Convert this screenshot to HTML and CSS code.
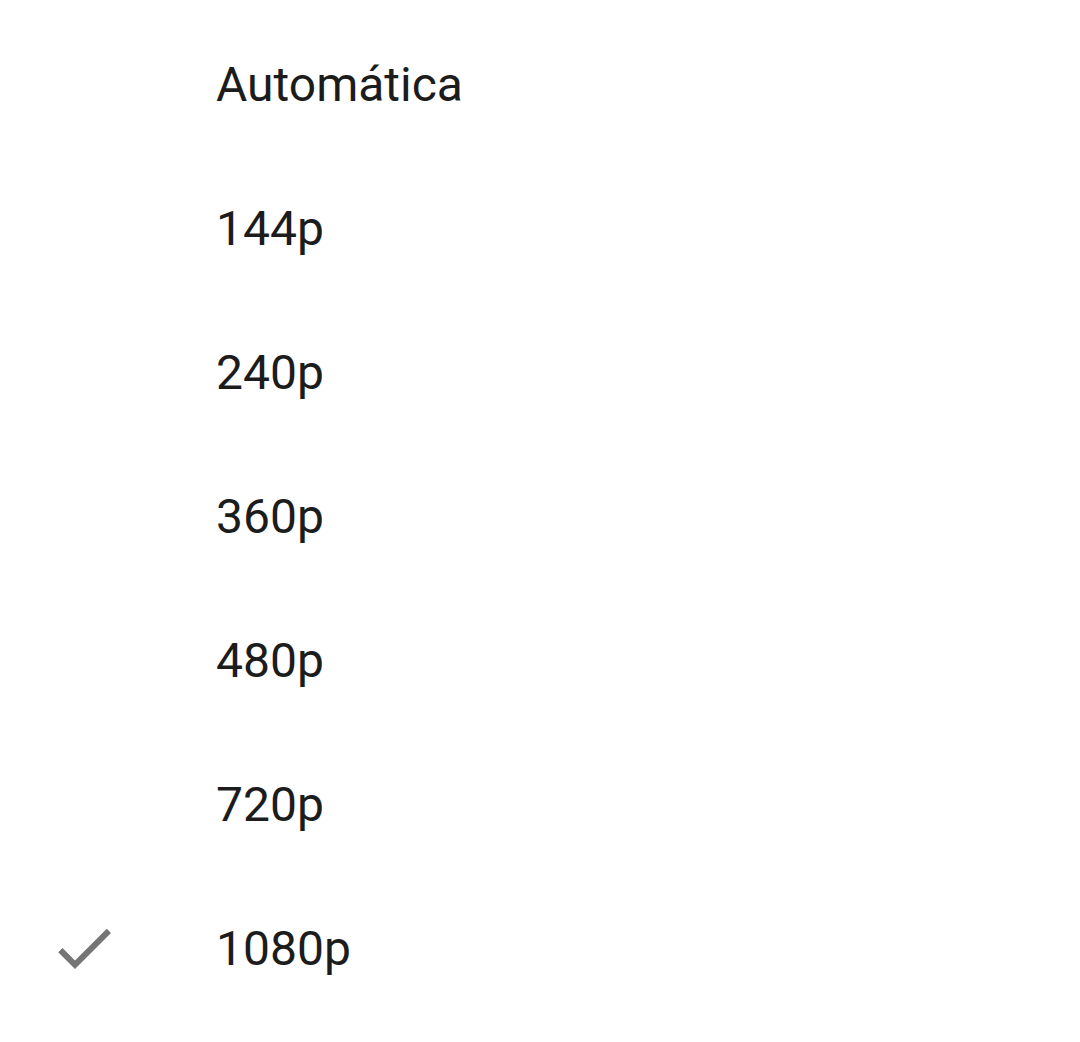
FILE: index.html
```html
<!DOCTYPE html>
<html lang="es">
<head>
<meta charset="utf-8">
<link rel="stylesheet" href="styles.css">
</head>
<body>
<ul class="menu">
  <li class="item"><span class="icon"></span><span class="label">Automática</span></li>
  <li class="item"><span class="icon"></span><span class="label">144p</span></li>
  <li class="item"><span class="icon"></span><span class="label">240p</span></li>
  <li class="item"><span class="icon"></span><span class="label">360p</span></li>
  <li class="item"><span class="icon"></span><span class="label">480p</span></li>
  <li class="item"><span class="icon"></span><span class="label">720p</span></li>
  <li class="item selected"><span class="icon"><svg viewBox="0 0 24 24" width="72" height="72"><path fill="#757575" d="M9 16.17L4.83 12l-1.42 1.41L9 19 21 7l-1.41-1.41z"/></svg></span><span class="label">1080p</span></li>
</ul>
</body>
</html>
```
FILE: styles.css
```css
html, body {
  margin: 0;
  padding: 0;
  background: #ffffff;
}
body {
  width: 1080px;
  height: 1042px;
  overflow: hidden;
  font-family: Roboto, "Noto Sans", sans-serif;
}
.menu {
  list-style: none;
  margin: 0;
  padding: 12px 0 0 0;
}
.item {
  display: flex;
  align-items: center;
  height: 144px;
}
.icon {
  width: 168px;
  padding-left: 48px;
  height: 72px;
  display: flex;
  align-items: center;
}
.icon svg {
  display: block;
}
.label {
  font-size: 48px;
  color: #1c1c1c;
  line-height: normal;
}
```
